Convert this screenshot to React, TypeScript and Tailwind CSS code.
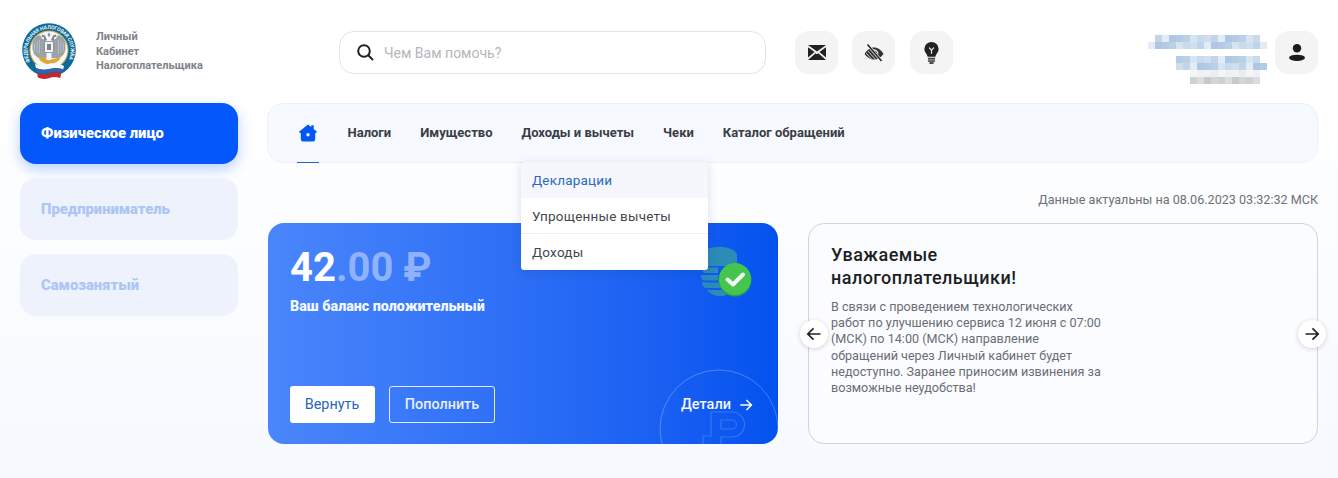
import React from "react";

const blue = ["#d6e3f1", "#c0d4ea", "#b3cbe5", "#c9daec", "#e2ecf6", "#bad0e7", "#cfdfef", "#afc7e3"];

function Mosaic({ start, cells, palette }: { start: number; cells: number; palette: string[] }) {
  return (
    <div className="flex justify-end">
      {Array.from({ length: cells }).map((_, i) => (
        <div key={i} className="h-[7px] w-[7px]" style={{ background: palette[(i * 3 + start) % palette.length] }} />
      ))}
    </div>
  );
}

function Wing() {
  return (
    <g>
      <path d="M26.500 18 L22 15.500 L20 12 L15.500 14 L12.500 19 L12.500 26 L14 31 L17 34 L21 35.500 L26.500 35z" fill="#9aa2aa" />
      <path d="M14.500 20v8M17 18v12M19.500 17v14" stroke="#c9ced3" strokeWidth="0.6" />
      <path d="M27 17 L25 12.500 L22 11.500 L21.500 13.500 L24 14.500 L24 18z" fill="#7f8890" />
    </g>
  );
}

function Logo() {
  return (
    <svg width="58" height="58" viewBox="0 0 58 58" className="shrink-0">
      <defs>
        <path id="arcText" d="M10.800 39.500 A21.700 21.700 0 1 1 47.200 39.500" fill="none" />
      </defs>
      <circle cx="29" cy="27" r="26.800" fill="#0e6a97" />
      <circle cx="29" cy="27" r="19.500" fill="#d9a93e" />
      <circle cx="29" cy="27" r="18.500" fill="#f5f7f8" />
      <text fontFamily="Roboto, sans-serif" fontWeight="700" fontSize="5.200" fill="#eaf2f7">
        <textPath href="#arcText" startOffset="1" textLength="88" lengthAdjust="spacing">ФЕДЕРАЛЬНАЯ НАЛОГОВАЯ СЛУЖБА</textPath>
      </text>
      <Wing />
      <g transform="matrix(-1 0 0 1 58 0)"><Wing /></g>
      <path d="M29 9.500l1.500 2-1.500 3-1.500-3z" fill="#8a9299" />
      <rect x="24.500" y="18.500" width="9" height="11" rx="1" fill="#f4f6f7" stroke="#7c858d" strokeWidth="0.8" />
      <rect x="27" y="21" width="4" height="6" fill="#7c858d" />
      <path d="M18 33 q3 3 7 1 l2 3 q3 1 5-1 l3 0 q4-1 6-5 l-1 5 q-4 5-9 4 q-3 2-7 0 q-5-2-6-7z" fill="#e0a636" />
      <path d="M15 41 q7 3 14 1 q8-3 15 1 l-1 4 q-7-3-14-1 q-7 2-13-1z" fill="#fafbfc" />
      <path d="M15.800 45 q6.500 3 13.200 1 q7-2 14 0 l-.5 4 q-7-2-13.500 0 q-6.500 2-13-1z" fill="#3064ab" />
      <path d="M17.300 50 q6 2.500 12 .5 q6-2 12-.5 l-1 5 q-6-2-11 0 q-6 2-11.500-.5z" fill="#c9252e" />
    </svg>
  );
}

function Mail() {
  return (
    <svg width="18" height="15" viewBox="0 0 18 15">
      <path d="M0 0h18L9 6.500z" fill="#222" />
      <path d="M0 2.200v10.400L6.600 7z" fill="#222" />
      <path d="M18 2.200v10.400L11.400 7z" fill="#222" />
      <path d="M0 15L7.600 8.300 9 9.300l1.400-1L18 15z" fill="#222" />
    </svg>
  );
}

function EyeOff() {
  return (
    <svg width="20" height="18" viewBox="0 0 20 18">
      <path d="M0.500 10C3 6 6 3.500 10 3.500s7.200 2.500 9.500 6.500c-2.300 3.500-5.500 5.500-9.500 5.500S3 13.500.5 10z" fill="#333" />
      <path d="M2 9l6 6.500M4 7l7.500 8.500M6.500 5l8 9.500" stroke="#f4f4f4" strokeWidth="0.800" />
      <path d="M8 6.500a4 4 0 0 1 6 3.500" stroke="#f4f4f4" strokeWidth="1.100" fill="none" />
      <path d="M3.500 0.500L17.500 17" stroke="#f4f4f4" strokeWidth="2.800" />
      <path d="M3.500 0.500L17.500 17" stroke="#222" strokeWidth="1.500" />
    </svg>
  );
}

function Bulb() {
  return (
    <svg width="15" height="22" viewBox="0 0 14 21">
      <path d="M7 0a6.800 6.800 0 0 1 6.800 6.800c0 2.800-1.800 4.200-2.600 5.800-.3.600-.4 1-.4 1.400H3.200c0-.4-.1-.8-.4-1.400C2 11 .2 9.600.2 6.800A6.800 6.800 0 0 1 7 0z" fill="#222" />
      <path d="M4.800 5.300L7 8l2.200-2.700M7 8v3.200" stroke="#f4f4f4" strokeWidth="1.100" fill="none" />
      <rect x="3.600" y="15" width="6.800" height="1.800" fill="#444" />
      <rect x="3.600" y="17.400" width="6.800" height="1.500" fill="#444" />
      <rect x="5" y="19.300" width="4" height="1.500" fill="#222" />
    </svg>
  );
}

function UserIcon() {
  return (
    <svg width="16" height="17" viewBox="0 0 16 17">
      <circle cx="8" cy="4.300" r="4.200" fill="#1c1c1c" />
      <ellipse cx="8" cy="13.800" rx="8" ry="3.100" fill="#1c1c1c" />
    </svg>
  );
}

function Home() {
  return (
    <svg width="18" height="18" viewBox="0 0 18 18">
      <path d="M9 .5l3.300 2.600V1.300h2.400v3.700L18 7.700l-1 1.200h-.8v6.300a2.300 2.300 0 0 1-2.300 2.300H4.100a2.300 2.300 0 0 1-2.300-2.300V8.900H1L0 7.700z" fill="#0457f5" />
      <circle cx="9" cy="10.800" r="1.700" fill="#f6f9ff" />
    </svg>
  );
}

function Arrow({ left, color, size }: { left?: boolean; color: string; size: number }) {
  return (
    <svg width={size} height={size} viewBox="0 0 16 16" fill="none" stroke={color} strokeWidth="1.700" style={left ? { transform: "scaleX(-1)" } : undefined}>
      <path d="M1.500 8h12.500M8.500 2.300L14.200 8l-5.700 5.700" />
    </svg>
  );
}

function Coins() {
  return (
    <svg width="52" height="50" viewBox="0 0 52 50" className="absolute right-[25px] top-[24px]">
      <g fill="#3394ad" fillOpacity="0.85">
        <path d="M2 6C4 1 12 0 19 0c8 0 14 2 17 7v12H2z" />
        <path d="M1 20.500h16v5.500H4c-2 0-3-3-3-5.500z" />
        <path d="M0 28h17v5.500H3c-2 0-3-3-3-5.500z" />
        <path d="M1 35.500h20v5.500H5c-2 0-4-3-4-5.500z" />
        <path d="M6 43h26c-3 4-8 6-13 6-5 0-10-2-13-6z" />
      </g>
      <circle cx="34" cy="33" r="16.500" fill="#27a049" />
      <circle cx="34" cy="32" r="16" fill="#45c54e" />
      <path d="M26.500 32.500l5.500 5 10-10" stroke="#f3fbf3" strokeWidth="4" fill="none" strokeLinecap="round" strokeLinejoin="round" />
    </svg>
  );
}

function CoinDeco() {
  return (
    <svg width="120" height="75" viewBox="0 0 120 75" className="absolute bottom-0 right-0" fill="none" stroke="#ffffff" strokeOpacity="0.26">
      <circle cx="61" cy="60" r="59" />
      <path d="M45 75V67H53V43H74a12.500 12.500 0 0 1 0 25H63V75M63 51V60H74a4.500 4.500 0 0 0 0-9z" strokeOpacity="0.18" strokeWidth="1.200" />
    </svg>
  );
}

export default function App() {
  return (
    <div className="h-[478px] w-[1338px] overflow-hidden bg-gradient-to-b from-white from-[18%] to-[#f6f9ff] font-['Roboto',sans-serif]">
      <header className="flex h-[103px] items-start pl-5 pr-5 pt-[31px]">
        <div className="-mt-2 flex w-[319px] items-center gap-[18px]">
          <Logo />
          <div className="text-[11px] font-bold leading-[14.500px] text-[#80838a]">
            <div>Личный</div>
            <div>Кабинет</div>
            <div>Налогоплательщика</div>
          </div>
        </div>
        <div className="flex h-[43px] w-[427px] items-center gap-[10px] rounded-[15px] border border-[#e2e3e6] bg-white pl-[17px]">
          <svg width="17" height="17" viewBox="0 0 17 17" fill="none" stroke="#222" strokeWidth="2">
            <circle cx="7" cy="7" r="5.800" />
            <path d="M11 11l5 5" />
          </svg>
          <span className="pt-[2px] text-[14px] text-[#b4b6b9]">Чем Вам помочь?</span>
        </div>
        <div className="ml-[29px] flex gap-[14px]">
          <div className="flex h-[43px] w-[43px] items-center justify-center rounded-[14px] bg-[#f4f4f4]"><Mail /></div>
          <div className="flex h-[43px] w-[43px] items-center justify-center rounded-[14px] bg-[#f4f4f4]"><EyeOff /></div>
          <div className="ml-[1px] flex h-[43px] w-[43px] items-center justify-center rounded-[14px] bg-[#f4f4f4]"><Bulb /></div>
        </div>
        <div className="ml-auto mr-[8px] mt-[4px] flex w-[119px] flex-col">
          <div className="pr-[7px]"><Mosaic start={1} cells={15} palette={blue} /></div>
          <div><Mosaic start={4} cells={17} palette={blue} /></div>
          <div className="h-[7px]" />
          <div className="pr-[7px]"><Mosaic start={2} cells={12} palette={blue} /></div>
          <div><Mosaic start={6} cells={13} palette={blue} /></div>
          <div className="pr-[7px]"><Mosaic start={1} cells={10} palette={["#f0f1f2", "#f4f5f5", "#ecedee", "#f2f2f3"]} /></div>
          <div className="pr-[7px]"><Mosaic start={3} cells={10} palette={["#d4d5d7", "#c8c9cc", "#dcdddf", "#cfd0d3"]} /></div>
        </div>
        <div className="flex h-[43px] w-[43px] items-center justify-center rounded-[14px] bg-[#f4f4f4]"><UserIcon /></div>
      </header>

      <div className="flex gap-[29px] pl-5 pr-5">
        <aside className="flex w-[218px] shrink-0 flex-col gap-[14px]">
          <div className="flex h-[61px] items-center rounded-[16px] bg-[#0457fb] pb-[1px] pl-[21px] text-[14.800px] font-black text-white shadow-[0_5px_14px_rgba(4,87,251,0.28)]">Физическое лицо</div>
          <div className="flex h-[62px] items-center rounded-[16px] bg-[#edf2fd] pl-[21px] text-[14.800px] font-black text-[#adc5f5]">Предприниматель</div>
          <div className="flex h-[62px] items-center rounded-[16px] bg-[#edf2fd] pl-[21px] text-[14.800px] font-black text-[#adc5f5]">Самозанятый</div>
        </aside>

        <main className="flex w-[1051px] flex-col">
          <nav className="relative flex h-[60px] items-center rounded-[16px] border border-[#edf0f7] bg-[#f6f9ff] pl-[29px] text-[13px] font-bold text-[#3a3d42]">
            <div className="relative flex h-[58px] w-[22px] items-center justify-start pl-[2px]">
              <Home />
              <div className="absolute -bottom-[1px] left-0 h-[1px] w-[22px] bg-[#1f63c4]" />
            </div>
            <span className="ml-[28.500px]">Налоги</span>
            <span className="ml-[29px]">Имущество</span>
            <span className="relative ml-[29px] flex h-[58px] items-center">
              Доходы и вычеты
              <span className="absolute -bottom-[1px] left-0 h-[1px] w-full bg-[#a9bfec]" />
            </span>
            <span className="ml-[29px]">Чеки</span>
            <span className="ml-[29px]">Каталог обращений</span>
            <div className="absolute left-[253px] top-[58px] z-20 w-[187px] overflow-hidden rounded-[3px] bg-white text-[13.500px] font-normal text-[#44474c] shadow-[0_2px_10px_rgba(30,50,90,0.16)]">
              <div className="flex h-[36px] items-center bg-[#f5f7fc] pl-[11px] tracking-[0.2px] text-[#2d68bf]">Декларации</div>
              <div className="flex h-[36px] items-center border-b border-[#eef0f3] pl-[11px] pt-[1px] tracking-[0.2px]">Упрощенные вычеты</div>
              <div className="flex h-[36px] items-center pl-[11px] tracking-[0.2px]">Доходы</div>
            </div>
          </nav>

          <div className="mt-[29px] h-[16px] text-right text-[12.600px] leading-[16px] text-[#6c7077]">Данные актуальны на 08.06.2023 03:32:32 МСК</div>

          <div className="mt-[15px] flex gap-[30px] pl-[1px]">
            <section className="relative flex h-[221px] w-[510px] flex-col overflow-hidden rounded-[16px] bg-gradient-to-r from-[#4a86fb] to-[#0352ef] pl-[22px] text-white">
              <Coins />
              <CoinDeco />
              <div className="mt-[20px] text-[40px] font-bold leading-[50px]">
                42<span className="text-[#90b2fd]">.00 ₽</span>
              </div>
              <div className="mt-[3px] text-[14.300px] font-black leading-[20px] text-[#f2f6ff]">Ваш баланс положительный</div>
              <div className="mt-[70px] flex items-center gap-[14px] text-[14.400px]">
                <div className="flex h-[37px] w-[85px] items-center justify-center rounded-[3px] bg-white pr-[1px] text-[#2a65bd]">Вернуть</div>
                <div className="flex h-[37px] w-[106px] items-center justify-center rounded-[3px] border border-[#e3ecff] font-medium text-[#e8efff]">Пополнить</div>
                <div className="relative z-10 ml-auto mr-[25px] flex items-center gap-[8px] font-medium text-[#f4f7ff]">
                  <span className="text-[14.500px]">Детали</span> <Arrow color="#ffffff" size={14} />
                </div>
              </div>
            </section>

            <section className="relative h-[221px] w-[510px] rounded-[16px] border border-[#d2d4da] bg-[#fbfcff] pl-[22px] pt-[19px]">
              <h2 className="text-[18px] font-medium leading-[23px] tracking-[0.45px] text-[#1d1f23]">
                Уважаемые<br />налогоплательщики!
              </h2>
              <p className="mt-[10px] w-[274px] text-[12.600px] leading-[16.200px] text-[#696d74]">
                В связи с проведением технологических работ по улучшению сервиса 12 июня с 07:00 (МСК) по 14:00 (МСК) направление обращений через Личный кабинет будет недоступно. Заранее приносим извинения за возможные неудобства!
              </p>
              <div className="absolute -left-[9px] top-[96px] flex h-[28px] w-[28px] items-center justify-center rounded-full bg-white shadow-[0_1px_5px_rgba(0,0,0,0.16)]">
                <Arrow left color="#222" size={16} />
              </div>
              <div className="absolute -right-[9px] top-[96px] flex h-[28px] w-[28px] items-center justify-center rounded-full bg-white shadow-[0_1px_5px_rgba(0,0,0,0.16)]">
                <Arrow color="#222" size={16} />
              </div>
            </section>
          </div>
        </main>
      </div>
    </div>
  );
}
